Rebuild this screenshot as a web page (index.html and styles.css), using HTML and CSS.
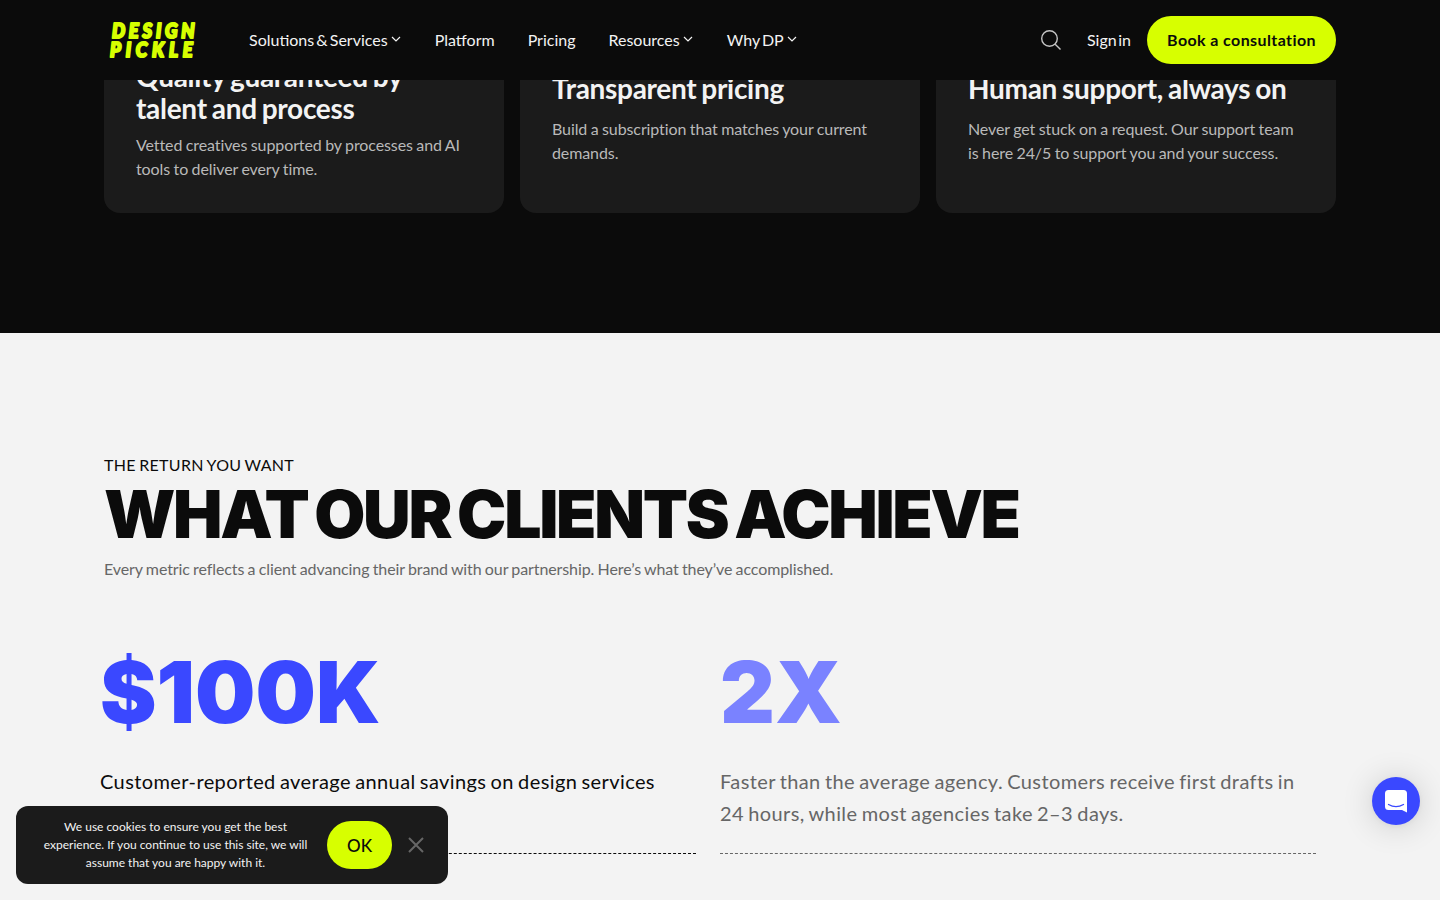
FILE: index.html
```html
<!DOCTYPE html>
<html lang="en">
<head>
  <meta charset="UTF-8" />
  <title>Design Pickle</title>
  <link rel="stylesheet" href="styles.css">
</head>
<body>
  <header class="site-header">
    <a class="logo" href="#" aria-label="Design Pickle">
      <svg width="96" height="48" viewBox="0 0 96 48">
        <g transform="scale(0.88 1)">
          <text x="9" y="22" textLength="94" lengthAdjust="spacing">DESIGN</text>
          <text x="6.800" y="41" textLength="94" lengthAdjust="spacing">PICKLE</text>
        </g>
      </svg>
    </a>
    <nav class="main-nav">
      <a href="#">Solutions &amp; Services <svg class="chev" viewBox="0 0 12 12"><path d="M2 4l4 4 4-4"/></svg></a>
      <a href="#">Platform</a>
      <a href="#">Pricing</a>
      <a href="#">Resources <svg class="chev" viewBox="0 0 12 12"><path d="M2 4l4 4 4-4"/></svg></a>
      <a href="#">Why DP <svg class="chev" viewBox="0 0 12 12"><path d="M2 4l4 4 4-4"/></svg></a>
    </nav>
    <div class="header-right">
      <svg class="search" viewBox="0 0 20 20"><circle cx="8.500" cy="8.500" r="7.800"/><path d="M14.200 14.200l5.300 5.300"/></svg>
      <a class="sign-in" href="#">Sign in</a>
      <a class="book-btn" href="#">Book a consultation</a>
    </div>
  </header>

  <section class="dark-section">
    <div class="cards">
      <div class="card card-first">
        <h3>Quality guaranteed by talent and process</h3>
        <p>Vetted creatives supported by processes and AI tools to deliver every time.</p>
      </div>
      <div class="card">
        <h3>Transparent pricing</h3>
        <p>Build a subscription that matches your current demands.</p>
      </div>
      <div class="card">
        <h3>Human support, always on</h3>
        <p>Never get stuck on a request. Our support team is here 24/5 to support you and your success.</p>
      </div>
    </div>
  </section>

  <section class="results">
    <div class="eyebrow">THE RETURN YOU WANT</div>
    <h2>WHAT OUR CLIENTS ACHIEVE</h2>
    <p class="lead">Every metric reflects a client advancing their brand with our partnership. Here’s what they’ve accomplished.</p>
    <div class="stats">
      <div class="stat">
        <div class="number">$100K</div>
        <p>Customer-reported average annual savings on design services</p>
      </div>
      <div class="stat stat-faded">
        <div class="number">2X</div>
        <p>Faster than the average agency. Customers receive first drafts in 24 hours, while most agencies take 2–3 days.</p>
      </div>
    </div>
  </section>

  <!-- cookie notice -->
  <div class="cookie">
    <p>We use cookies to ensure you get the best experience. If you continue to use this site, we will assume that you are happy with it.</p>
    <button class="ok-btn">OK</button>
    <svg class="cookie-close" viewBox="0 0 16 16"><path d="M1 1l14 14M15 1L1 15"/></svg>
  </div>

  <div class="chat-btn">
    <svg width="24" height="24" viewBox="0 0 24 24"><path class="bubble" d="M4.500 1h15A3.500 3.500 0 0 1 23 4.500V23.500l-5-2.500H4.500A3.500 3.500 0 0 1 1 17.500V4.500A3.500 3.500 0 0 1 4.500 1z"/><path class="smile" d="M4.500 15.500c4.500 2.600 10.500 2.600 15 0"/></svg>
  </div>
</body>
</html>
```

FILE: styles.css
```css
* {
  box-sizing: border-box;
}
html, body {
  height: 900px;
  overflow: hidden;
}
body {
  margin: 0;
  font-family: 'Lato', sans-serif;
  background: #f3f3f3;
  color: #0b0b0b;
}
a {
  color: inherit;
  text-decoration: none;
}

/* header */
.site-header {
  position: fixed;
  top: 0;
  left: 0;
  right: 0;
  height: 80px;
  padding: 0 104px;
  background: #0b0b0b;
  color: #f3f3f3;
  display: flex;
  align-items: center;
  z-index: 10;
}
.logo {
  display: block;
  width: 96px;
  height: 48px;
  margin-right: 49px;
}
.logo text {
  font-family: 'Lato', sans-serif;
  font-weight: 900;
  font-style: italic;
  font-size: 21px;
  fill: #d7ff00;
  stroke: #d7ff00;
  stroke-width: 2.200px;
  stroke-linejoin: round;
}
.main-nav {
  display: flex;
  gap: 33px;
  padding-bottom: 2px;
  font-size: 16px;
  word-spacing: -2px;
}
.main-nav a {
  display: flex;
  align-items: center;
  gap: 2px;
}
.chev {
  width: 12px;
  height: 12px;
  fill: none;
  stroke: #f3f3f3;
  stroke-width: 1.2;
}
.header-right {
  margin-left: auto;
  display: flex;
  align-items: center;
  font-size: 16px;
}
.search {
  width: 20px;
  height: 20px;
  fill: none;
  stroke: #c4c4c4;
  stroke-width: 1.4;
  margin-right: 26px;
}
.sign-in {
  margin-right: 16px;
  padding-bottom: 2px;
  word-spacing: -2.500px;
}
.book-btn {
  height: 48px;
  width: 189px;
  padding-bottom: 2px;
  border-radius: 24px;
  background: #d7ff00;
  color: #0b0b0b;
  font-weight: 700;
  letter-spacing: 0.4px;
  display: flex;
  align-items: center;
  justify-content: center;
}

/* cards under the header */
.dark-section {
  height: 333px;
  background: #0b0b0b;
  padding: 0 104px;
}
.cards {
  display: grid;
  grid-template-columns: repeat(3, 1fr);
  gap: 16px;
}
.card {
  height: 213px;
  padding: 72px 32px 0;
  background: #1b1b1b;
  border-radius: 0 0 16px 16px;
  color: #f3f3f3;
}
.card-first {
  padding-top: 60px;
}
.card h3 {
  margin: 0 0 13px;
  font-size: 28px;
  line-height: 32px;
  font-weight: 700;
  letter-spacing: -0.3px;
  word-spacing: -1.500px;
}
.card-first h3 {
  margin-bottom: 9px;
}
.card p {
  margin: 0;
  font-size: 16px;
  line-height: 24px;
  letter-spacing: -0.1px;
  word-spacing: -0.5px;
  color: #b9b9b9;
}

/* results */
.results {
  padding: 120px 104px 0;
}
.eyebrow {
  font-size: 16px;
  line-height: 24px;
  letter-spacing: 0.3px;
  word-spacing: -1px;
}
.results h2 {
  margin: 1px 0 0;
  font-family: 'Inter', sans-serif;
  font-weight: 900;
  font-size: 66px;
  line-height: 72px;
  letter-spacing: -2.300px;
  word-spacing: -4px;
  color: #0b0b0b;
}
.lead {
  margin: 7px 0 0;
  font-size: 16px;
  line-height: 24px;
  letter-spacing: -0.1px;
  word-spacing: -0.7px;
  color: #666;
}
.stats {
  display: grid;
  grid-template-columns: 596px 596px;
  gap: 24px;
  margin: 64px 0 0 -4px;
}
.stat {
  height: 209px;
  border-bottom: 1px dashed #0b0b0b;
}
.stat .number {
  font-family: 'Inter', sans-serif;
  font-weight: 900;
  font-size: 85px;
  line-height: 96px;
  color: #3a48ff;
}
.stat p {
  margin: 24px 0 0;
  font-size: 20px;
  line-height: 32px;
  letter-spacing: 0.4px;
  word-spacing: -1.300px;
  color: #0b0b0b;
}
.stat-faded {
  border-bottom-color: #666;
}
.stat-faded .number {
  color: #7a82ff;
}
.stat-faded p {
  color: #666;
}

/* cookie notice */
.cookie {
  position: fixed;
  left: 16px;
  bottom: 16px;
  width: 432px;
  height: 78px;
  padding: 0 24px;
  background: #1b1b1b;
  border-radius: 12px;
  color: #f3f3f3;
  display: flex;
  align-items: center;
}
.cookie p {
  margin: 0;
  width: 271px;
  flex: none;
  font-size: 12px;
  line-height: 18px;
  text-align: center;
}
.ok-btn {
  width: 65px;
  height: 48px;
  margin-left: 16px;
  flex: none;
  border: none;
  border-radius: 24px;
  background: #d7ff00;
  color: #0b0b0b;
  font-family: 'Lato', sans-serif;
  font-size: 17px;
  font-weight: 500;
}
.cookie-close {
  width: 16px;
  height: 16px;
  margin-left: 16px;
  fill: none;
  stroke: #666;
  stroke-width: 2;
}

/* chat launcher */
.chat-btn {
  position: fixed;
  right: 20px;
  bottom: 75px;
  width: 48px;
  height: 48px;
  border-radius: 50%;
  background: #3a48ff;
  box-shadow: 0 1px 6px rgba(0,0,0,0.06), 0 2px 32px rgba(0,0,0,0.16);
  display: flex;
  align-items: center;
  justify-content: center;
}
.bubble {
  fill: #fff;
}
.smile {
  fill: none;
  stroke: #3a48ff;
  stroke-width: 1.3;
  stroke-linecap: round;
}
```
